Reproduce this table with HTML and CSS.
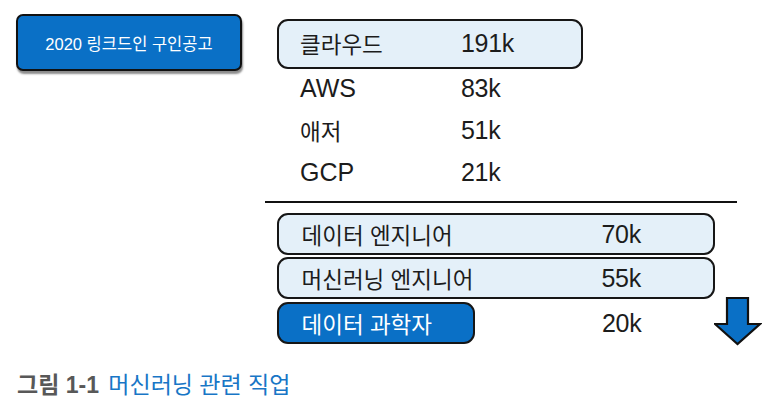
FILE: index.html
```html
<!DOCTYPE html>
<html lang="ko">
<head>
<meta charset="utf-8">
<link rel="stylesheet" href="styles.css">
</head>
<body>
<div class="page">
  <div class="top">
    <div class="side">
      <div class="badge">2020 링크드인 구인공고</div>
    </div>
    <div class="main">
      <div class="cloud">
        <div class="row boxed"><span class="lbl">클라우드</span><span class="num">191k</span></div>
        <div class="row plain"><span class="lbl en">AWS</span><span class="num">83k</span></div>
        <div class="row plain"><span class="lbl">애저</span><span class="num">51k</span></div>
        <div class="row plain"><span class="lbl en">GCP</span><span class="num">21k</span></div>
      </div>
      <div class="rule"></div>
      <div class="jobs">
        <div class="jrow boxed"><span class="lbl">데이터 엔지니어</span><span class="num">70k</span></div>
        <div class="jrow boxed"><span class="lbl">머신러닝 엔지니어</span><span class="num">55k</span></div>
        <div class="jrow open">
          <span class="lbl dark">데이터 과학자</span><span class="num">20k</span>
          <svg class="arrow" width="48" height="50" viewBox="0 0 48 50">
            <polygon points="13,2 34,2 34,28 46,28 23.5,48 1,28 13,28" fill="#0a70c6" stroke="#111" stroke-width="2.2" stroke-linejoin="miter"/>
          </svg>
        </div>
      </div>
    </div>
  </div>
  <p class="caption"><span class="fig">그림 1-1</span> <span class="title">머신러닝 관련 직업</span></p>
</div>
</body>
</html>
```

FILE: styles.css
```css
html, body {
  margin: 0;
  padding: 0;
  background: #fff;
}
body {
  font-family: "Liberation Sans", "Noto Sans CJK KR", sans-serif;
  color: #1c1c1c;
}
.page {
  width: 771px;
  height: 403px;
  box-sizing: border-box;
  padding: 14px 0 0 16px;
  display: flex;
  flex-direction: column;
}
.top {
  display: flex;
  align-items: flex-start;
}
.side {
  width: 249px;
  flex: none;
}
.badge {
  width: 226px;
  height: 57px;
  box-sizing: border-box;
  background: #0a70c6;
  border: 2px solid #111;
  border-radius: 7px;
  box-shadow: 1px 3px 2px rgba(0, 0, 0, 0.45);
  color: #fff;
  font-size: 16.5px;
  display: flex;
  align-items: center;
  justify-content: center;
  padding-top: 1px;
}
.main {
  width: 497px;
  display: flex;
  flex-direction: column;
}
.cloud {
  margin-left: 12px;
  margin-top: 5px;
  display: flex;
  flex-direction: column;
}
.row {
  display: flex;
  align-items: center;
}
.row.boxed {
  width: 306px;
  height: 50px;
  box-sizing: border-box;
  border: 2.5px solid #161616;
  border-radius: 11px;
  background: #e4f0f9;
  padding-left: 21px;
  padding-bottom: 2px;
}
.row.plain {
  height: 42px;
  padding-left: 23px;
  padding-bottom: 4px;
  box-sizing: border-box;
}
.lbl {
  font-size: 22.5px;
  font-family: "Noto Sans CJK KR", sans-serif;
  white-space: nowrap;
}
.lbl.en {
  font-family: "Liberation Sans", sans-serif;
  font-size: 25px;
}
.row .lbl {
  width: 161px;
  flex: none;
}
.num {
  font-size: 25px;
  letter-spacing: -0.3px;
}
.rule {
  height: 2px;
  width: 472px;
  background: #111;
  margin-top: 6px;
}
.jobs {
  margin-top: 10px;
  margin-left: 12px;
  display: flex;
  flex-direction: column;
  gap: 2px;
}
.jrow {
  display: flex;
  align-items: center;
  height: 42px;
  box-sizing: border-box;
}
.jrow.boxed {
  width: 438px;
  border: 2.5px solid #161616;
  border-radius: 11px;
  background: #e4f0f9;
  padding-left: 22.5px;
}
.jrow.boxed .lbl {
  width: 300px;
  flex: none;
}
.jrow.open {
  width: 485px;
  margin-top: 1px;
}
.lbl.dark {
  width: 198px;
  height: 42px;
  box-sizing: border-box;
  flex: none;
  background: #0a70c6;
  color: #fff;
  border: 2.5px solid #161616;
  border-radius: 11px;
  padding-left: 22.5px;
  display: flex;
  align-items: center;
}
.jrow.open .num {
  margin-left: 127px;
}
.arrow {
  margin-left: auto;
  flex: none;
  margin-top: -4px;
}
.caption {
  margin: 22px 0 0 1px;
  font-size: 23px;
  font-family: "Liberation Sans", "Noto Sans CJK KR", sans-serif;
}
.fig {
  color: #585858;
  font-weight: bold;
}
.title {
  color: #1876c6;
  margin-left: 3px;
}
```
